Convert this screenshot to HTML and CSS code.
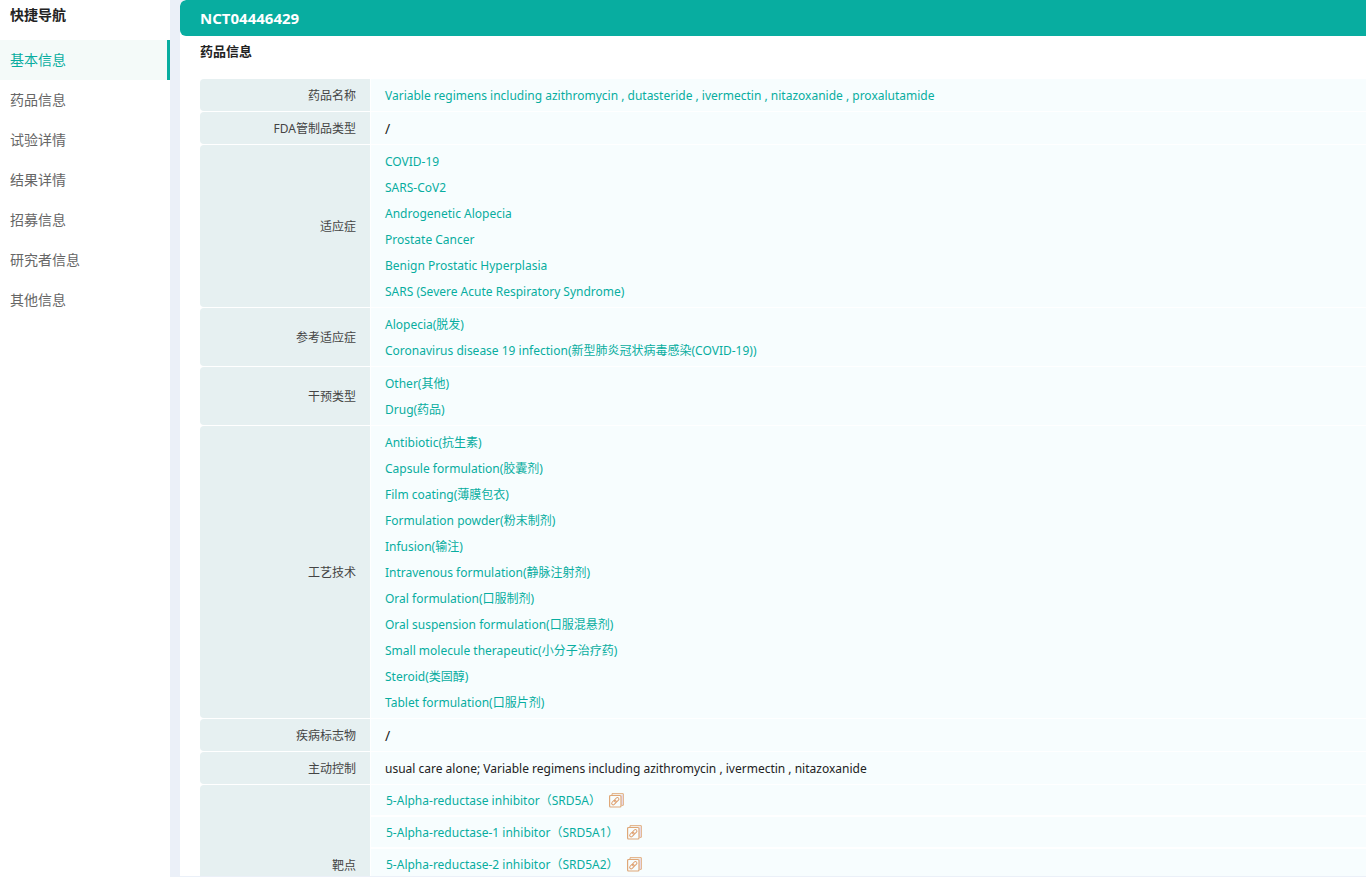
FILE: index.html
```html
<!DOCTYPE html>
<html lang="zh-CN">
<head>
<meta charset="utf-8">
<title>NCT04446429</title>
<link rel="stylesheet" href="styles.css">
</head>
<body>
<svg class="sprite" aria-hidden="true">
  <symbol id="linked" viewBox="0 0 15 15">
    <path d="M3 2.5V.7h11.3v11.6h-1.8" fill="none" stroke="#dfa878"/>
    <path d="M13 2v10" fill="none" stroke="#dcc3e6"/>
    <rect x=".6" y="2.5" width="11.4" height="11.5" rx="1" fill="none" stroke="#dfa878" stroke-width="1.2"/>
    <g transform="rotate(-45 6.3 8.2)" fill="none" stroke="#dfa070" stroke-width="1">
      <rect x="1.8" y="6.7" width="5.2" height="3" rx="1.5"/>
      <rect x="5.6" y="6.7" width="5.2" height="3" rx="1.5"/>
    </g>
  </symbol>
</svg>
<div class="shell">
  <nav class="sidebar" aria-labelledby="nav-title">
    <h2 class="sidebar-title" id="nav-title">快捷导航</h2>
    <a class="nav-link active" href="#basic">基本信息</a>
    <a class="nav-link" href="#drug">药品信息</a>
    <a class="nav-link" href="#trial">试验详情</a>
    <a class="nav-link" href="#result">结果详情</a>
    <a class="nav-link" href="#recruit">招募信息</a>
    <a class="nav-link" href="#researcher">研究者信息</a>
    <a class="nav-link" href="#other">其他信息</a>
  </nav>
  <main class="main">
    <h1 class="trial-id">NCT04446429</h1>
    <section class="section" id="drug">
      <h2 class="section-title">药品信息</h2>
      <table class="info">
        <tbody>
          <tr><th scope="row">药品名称</th><td><a href="#d">Variable regimens including azithromycin , dutasteride , ivermectin , nitazoxanide , proxalutamide</a></td></tr>
          <tr><th scope="row">FDA管制品类型</th><td class="empty">/</td></tr>
          <tr><th scope="row">适应症</th><td>
            <a href="#d">COVID-19</a>
            <a href="#d">SARS-CoV2</a>
            <a href="#d">Androgenetic Alopecia</a>
            <a href="#d">Prostate Cancer</a>
            <a href="#d">Benign Prostatic Hyperplasia</a>
            <a href="#d">SARS (Severe Acute Respiratory Syndrome)</a></td></tr>
          <tr><th scope="row">参考适应症</th><td>
            <a href="#d">Alopecia(脱发)</a>
            <a href="#d">Coronavirus disease 19 infection(新型肺炎冠状病毒感染(COVID-19))</a></td></tr>
          <tr><th scope="row">干预类型</th><td>
            <a href="#d">Other(其他)</a>
            <a href="#d">Drug(药品)</a></td></tr>
          <tr><th scope="row">工艺技术</th><td>
            <a href="#d">Antibiotic(抗生素)</a>
            <a href="#d">Capsule formulation(胶囊剂)</a>
            <a href="#d">Film coating(薄膜包衣)</a>
            <a href="#d">Formulation powder(粉末制剂)</a>
            <a href="#d">Infusion(输注)</a>
            <a href="#d">Intravenous formulation(静脉注射剂)</a>
            <a href="#d">Oral formulation(口服制剂)</a>
            <a href="#d">Oral suspension formulation(口服混悬剂)</a>
            <a href="#d">Small molecule therapeutic(小分子治疗药)</a>
            <a href="#d">Steroid(类固醇)</a>
            <a href="#d">Tablet formulation(口服片剂)</a></td></tr>
          <tr><th scope="row">疾病标志物</th><td class="empty">/</td></tr>
          <tr><th scope="row">主动控制</th><td>usual care alone; Variable regimens including azithromycin , ivermectin , nitazoxanide</td></tr>
          <tr class="targets"><th scope="row">靶点</th><td>
            <ul class="target-list">
              <li><a href="#d">5-Alpha-reductase inhibitor（SRD5A）</a><svg class="icon"><use href="#linked"/></svg></li>
              <li><a href="#d">5-Alpha-reductase-1 inhibitor（SRD5A1）</a><svg class="icon"><use href="#linked"/></svg></li>
              <li><a href="#d">5-Alpha-reductase-2 inhibitor（SRD5A2）</a><svg class="icon"><use href="#linked"/></svg></li>
            </ul></td></tr>
        </tbody>
      </table>
    </section>
  </main>
</div>
</body>
</html>
```
FILE: styles.css
```css
* { box-sizing: border-box; }
body {
  margin: 0;
  background: #ebf0f8;
  color: #222;
  font: 12px/26px "Noto Sans", "Noto Sans CJK SC", sans-serif;
}
a { color: #08ada0; text-decoration: none; }
.sprite { display: none; }
.shell { display: flex; gap: 10px; height: 100vh; overflow: hidden; }
.sidebar { width: 170px; flex: none; background: #fff; }
.sidebar-title {
  margin: 0;
  padding-left: 10px;
  height: 40px;
  font-size: 14px;
  line-height: 30px;
}
.nav-link {
  display: block;
  padding-left: 10px;
  color: #666;
  font-size: 14px;
  line-height: 40px;
}
.nav-link.active {
  background: #f4faf9;
  border-right: 3px solid #08ada0;
  color: #08ada0;
}
.main {
  flex: 1;
  min-width: 0;
  margin-bottom: 1px;
  overflow: hidden;
  border-radius: 6px 0 0 0;
  background: #fff;
}
.trial-id {
  margin: 0;
  padding-left: 20px;
  border-radius: 6px 0 0 6px;
  background: #08ada0;
  color: #fff;
  font-size: 15px;
  line-height: 36px;
}
.section { padding-left: 20px; }
.section-title { margin: 0; padding-bottom: 12px; font-size: 13px; line-height: 30px; }
.info { width: 100%; border-spacing: 0 1px; }
.info th,
.info td { padding: 4px 14px 2px; }
.info th {
  width: 170px;
  border-radius: 4px 0 0 4px;
  background: #e6f0f1;
  color: #444;
  font-weight: 400;
  text-align: right;
}
.info td { border-left: 1px solid #fff; background: #f7fdfe; }
.info td.empty { font-size: 14px; }
.info td > a { display: block; }
.info .targets td { height: 160px; padding: 0; vertical-align: top; }
.target-list { margin: 0; padding: 0; list-style: none; }
.target-list li {
  display: flex;
  align-items: center;
  gap: 8px;
  height: 32px;
  padding: 1px 0 0 15px;
  border-bottom: 2px solid #fff;
}
.icon { width: 15px; height: 15px; }
```
